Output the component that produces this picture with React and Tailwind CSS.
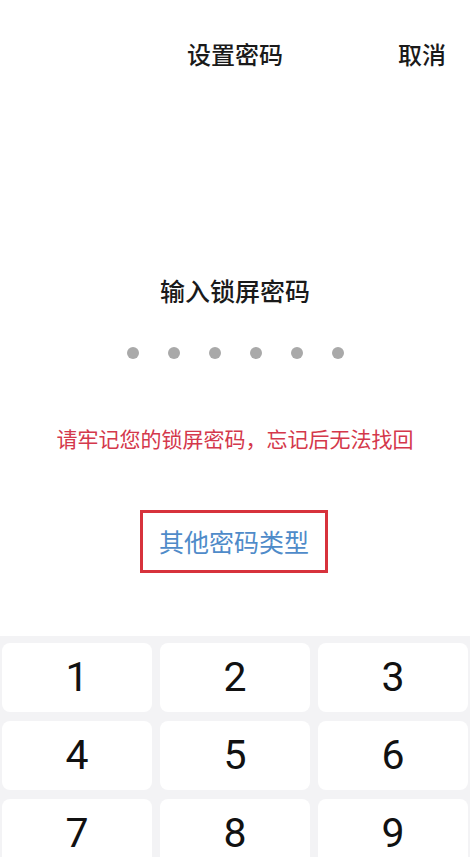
const CJK = { fontFamily: '"Noto Sans CJK SC", "Noto Sans", sans-serif' }

const keys = ['1', '2', '3', '4', '5', '6', '7', '8', '9', '', '0', '']

export default function App() {
  return (
    <div className="w-[470px] h-[857px] bg-white flex flex-col overflow-hidden" style={CJK}>
      {/* top bar */}
      <div className="h-[108px] grid grid-cols-[1fr_auto_1fr] items-center">
        <div />
        <div className="text-[24px] leading-[32px] font-medium text-[#1a1a1a]">设置密码</div>
        <div className="justify-self-end pr-[24px] text-[24px] leading-[32px] font-medium text-[#1a1a1a]">取消</div>
      </div>

      <div className="mt-[166px] text-center text-[25px] leading-[32px] font-medium text-[#1a1a1a]">
        输入锁屏密码
      </div>

      <div className="mt-[41px] flex justify-center gap-[29px] pl-[1px]">
        {[0, 1, 2, 3, 4, 5].map((i) => (
          <span key={i} className="w-[12px] h-[12px] rounded-full bg-[#a9a9a9]" />
        ))}
      </div>

      <div className="mt-[65px] text-center text-[21px] leading-[28px] text-[#d4384b]">
        请牢记您的锁屏密码，忘记后无法找回
      </div>

      <div className="mt-[58px] flex justify-center pr-[2px]">
        <div className="w-[188px] h-[63px] border-[3px] border-[#d7323c] flex items-center justify-center text-[25px] text-[#4f8bc9]">
          其他密码类型
        </div>
      </div>

      <div className="mt-auto h-[221px] bg-[#f3f3f5] pt-[7px] px-[2px] overflow-hidden">
        <div className="grid grid-cols-3 gap-x-[8px] gap-y-[9px]">
          {keys.map((k, i) => (
            <div
              key={i}
              className="h-[69px] rounded-[8px] bg-white flex items-center justify-center text-[41px] text-[#111]"
              style={{ fontFamily: 'Roboto, "Noto Sans", sans-serif' }}
            >
              {k}
            </div>
          ))}
        </div>
      </div>
    </div>
  )
}
